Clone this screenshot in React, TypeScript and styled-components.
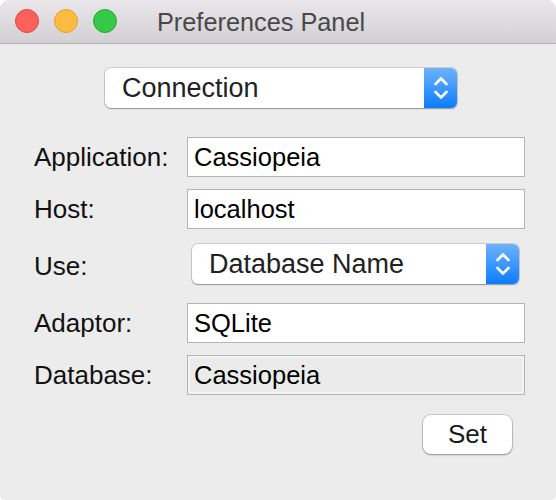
import styled, { createGlobalStyle } from 'styled-components'

const GlobalStyle = createGlobalStyle`
  html, body {
    margin: 0;
    padding: 0;
    background: #ffffff;
  }
  body {
    font-family: 'Liberation Sans', Arial, sans-serif;
  }
`

const Window = styled.div`
  width: 556px;
  height: 500px;
  display: flex;
  flex-direction: column;
  background: #ececec;
  border-radius: 9px 9px 5px 5px;
  overflow: hidden;
  box-sizing: border-box;
`

const TitleBar = styled.div`
  height: 43px;
  flex: none;
  display: flex;
  align-items: center;
  padding-left: 15px;
  background: linear-gradient(to bottom, #e9e7e9, #d2d0d2);
  border-bottom: 1px solid #b3b1b3;
`

const Lights = styled.div`
  display: flex;
  gap: 15px;
  margin-top: -1px;
`

const Light = styled.span<{ $fill: string; $edge: string }>`
  width: 22px;
  height: 22px;
  border-radius: 50%;
  background: ${(p) => p.$fill};
  border: 1px solid ${(p) => p.$edge};
`

const Title = styled.div`
  margin-left: 40px;
  margin-top: 1px;
  font-size: 25.3px;
  color: #4a484a;
`

const Content = styled.div`
  display: flex;
  flex-direction: column;
  padding: 24px 31px 0 34px;
`

const TopPopupWrap = styled.div`
  display: flex;
  justify-content: center;
  padding-left: 3px;
  margin-bottom: 29px;
`

const Popup = styled.div<{ $width: number }>`
  width: ${(p) => p.$width}px;
  height: 40px;
  display: flex;
  align-items: stretch;
  background: #ffffff;
  border-radius: 6px;
  box-shadow: 0 0 0 1px rgba(0, 0, 0, 0.13), 0 1px 1.5px rgba(0, 0, 0, 0.28);
  box-sizing: border-box;
`

const PopupText = styled.div`
  flex: 1;
  display: flex;
  align-items: center;
  padding-left: 17px;
  font-size: 27px;
  color: #222222;
`

const Stepper = styled.div`
  width: 33px;
  flex: none;
  display: flex;
  align-items: center;
  justify-content: center;
  border-radius: 0 6px 6px 0;
  background: linear-gradient(to bottom, #6db3fb, #0c7dff);
`

const Row = styled.div<{ $gap: number }>`
  display: flex;
  align-items: center;
  margin-top: ${(p) => p.$gap}px;
`

const Label = styled.label<{ $drop?: number }>`
  width: 153px;
  flex: none;
  font-size: 26px;
  color: #111111;
  padding-top: ${(p) => (p.$drop ?? 0) * 2}px;
`

const Field = styled.div<{ $disabled?: boolean }>`
  width: 338px;
  height: 40px;
  box-sizing: border-box;
  display: flex;
  align-items: center;
  padding-left: 6px;
  font-size: 25.5px;
  color: #000000;
  background: ${(p) => (p.$disabled ? '#ebebeb' : '#ffffff')};
  border: 1px solid #b4b4b4;
  box-shadow: ${(p) => (p.$disabled ? 'inset 0 0 0 2px #f4f4f4' : 'none')};
`

const PopupIndent = styled.div`
  padding-left: 5px;
`

const Footer = styled.div`
  display: flex;
  justify-content: flex-end;
  margin-top: 20px;
  padding-right: 13px;
`

const Button = styled.button`
  width: 89px;
  height: 39px;
  border: none;
  border-radius: 8px;
  background: #ffffff;
  box-shadow: 0 0 0 1px rgba(0, 0, 0, 0.14), 0 1px 2px rgba(0, 0, 0, 0.3);
  font-family: 'Liberation Sans', Arial, sans-serif;
  font-size: 26px;
  color: #1a1a1a;
  padding: 0;
`

function Chevrons() {
  return (
    <svg width="16" height="26" viewBox="0 0 16 26" fill="none">
      <path
        d="M2.5 9 L8 3.5 L13.5 9"
        stroke="#ffffff"
        strokeWidth="2.6"
        strokeLinecap="round"
        strokeLinejoin="round"
      />
      <path
        d="M2.5 17 L8 22.5 L13.5 17"
        stroke="#ffffff"
        strokeWidth="2.6"
        strokeLinecap="round"
        strokeLinejoin="round"
      />
    </svg>
  )
}

function PopupButton({ value, width }: { value: string; width: number }) {
  return (
    <Popup $width={width}>
      <PopupText>{value}</PopupText>
      <Stepper>
        <Chevrons />
      </Stepper>
    </Popup>
  )
}

export default function App() {
  return (
    <>
      <GlobalStyle />
      <Window>
        <TitleBar>
          <Lights>
            <Light $fill="#fc615c" $edge="#e0463f" />
            <Light $fill="#fdbc40" $edge="#dea033" />
            <Light $fill="#35c94a" $edge="#26a934" />
          </Lights>
          <Title>Preferences Panel</Title>
        </TitleBar>
        <Content>
          <TopPopupWrap>
            <PopupButton value="Connection" width={352} />
          </TopPopupWrap>
          <Row $gap={0}>
            <Label>Application:</Label>
            <Field>Cassiopeia</Field>
          </Row>
          <Row $gap={12}>
            <Label>Host:</Label>
            <Field>localhost</Field>
          </Row>
          <Row $gap={15}>
            <Label $drop={2}>Use:</Label>
            <PopupIndent>
              <PopupButton value="Database Name" width={327} />
            </PopupIndent>
          </Row>
          <Row $gap={19}>
            <Label>Adaptor:</Label>
            <Field>SQLite</Field>
          </Row>
          <Row $gap={12}>
            <Label>Database:</Label>
            <Field $disabled>Cassiopeia</Field>
          </Row>
          <Footer>
            <Button>Set</Button>
          </Footer>
        </Content>
      </Window>
    </>
  )
}
